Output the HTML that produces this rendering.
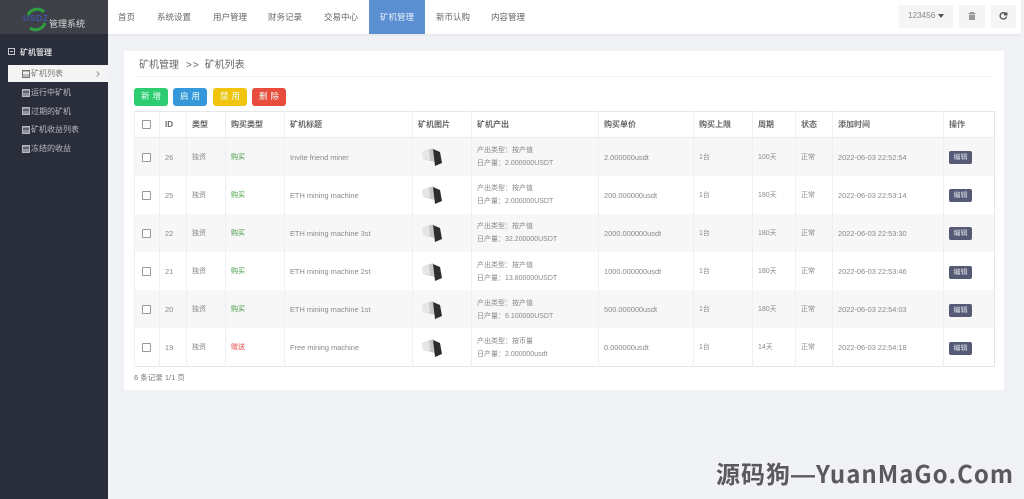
<!DOCTYPE html>
<html lang="zh-CN">
<head>
<meta charset="utf-8">
<title>矿机列表</title>
<style>
*{box-sizing:border-box}
html,body{margin:0;padding:0;width:1024px;height:499px;overflow:hidden;background:#f0f2f6;font-family:"Liberation Sans","Noto Sans CJK SC",sans-serif;color:#777}
#wrap{position:absolute;left:0;top:0;width:1024px;height:499px;background:#f0f2f6;filter:blur(.3px)}
.abs{position:absolute;white-space:nowrap}
#side{position:absolute;left:0;top:0;width:108px;height:499px;background:#2a2e3b}
#logo{position:absolute;left:0;top:0;width:108px;height:34px;background:#3e4147}
#top{position:absolute;left:108px;top:0;width:913px;height:34px;background:#fff;box-shadow:0 1px 2px rgba(0,0,0,.07)}
.nav{position:absolute;top:0;height:34px;line-height:34px;font-size:8.5px;color:#666;text-align:center}
.nav.on{background:#5a90d2;color:#e8f0fa}
.tb{position:absolute;top:5px;height:23px;background:#f5f5f5;border-radius:1px}
.menu{position:absolute;left:31px;font-size:8px;color:#b8bbc2;white-space:nowrap;line-height:10px}
.ico{position:absolute;left:22px;width:8px;height:8px;border:1px solid #b8bbc2;background:linear-gradient(#8f929a 0 1px,#5f626c 1px 3px,#8f929a 3px)}
#card{position:absolute;left:124px;top:51px;width:880px;height:339px;background:#fff}
.btn{position:absolute;top:88px;width:34px;height:17.5px;border-radius:3px;color:#e9fff3;font-size:8.5px;line-height:17.5px;text-align:center;letter-spacing:3px;padding-left:3px}
table{position:absolute;left:134px;top:111px;width:860px;height:256px;border-collapse:collapse;table-layout:fixed;font-size:7.4px;color:#888;background:#fff;border:1px solid #e5e6e8}
th,td{border-left:1px solid #eeeff0;padding:0 0 0 5px;white-space:nowrap;overflow:hidden;text-align:left;font-weight:normal}
th{height:26px;font-size:8px;color:#666;font-weight:bold;border-bottom:1px solid #e8e9ea}
td{height:38px;line-height:13px;padding-top:1px}
td.z{font-size:7px}
tr.alt td{background:#f7f7f7}
th.c,td.c{padding:0 1px 0 0;text-align:center}
.cb{display:inline-block;width:9px;height:9px;border:1px solid #999;border-radius:1px;background:#fff;vertical-align:middle}
.g{color:#3f9a3f}.r{color:#e04a4a}
.ed{display:inline-block;width:23px;height:13px;line-height:13px;background:#565a75;color:#dfe0e8;font-size:7px;text-align:center;border-radius:2px}
.mini{display:block;margin:0 0 0 3px}
#wm{position:absolute;left:716px;top:455px;font-size:24px;line-height:36px;font-weight:bold;color:#5a5a5d;white-space:nowrap;font-family:"Noto Sans CJK SC","Liberation Sans",sans-serif;letter-spacing:1px}
#wm span{font-family:"Liberation Sans",sans-serif}
</style>
</head>
<body>
<div id="wrap">
<div id="side">
<div id="logo">
<svg class="abs" style="left:22px;top:6px" width="28" height="26" viewBox="0 0 28 26"><path d="M6 9A10 10 0 0 1 22 6" fill="none" stroke="#2f9e3f" stroke-width="3"/><path d="M8 22A10 10 0 0 0 23 17" fill="none" stroke="#2f9e3f" stroke-width="3"/></svg>
<div class="abs" style="left:23px;top:13px;font-size:8.5px;font-weight:bold;letter-spacing:.6px;color:#3f55a8">USDZ</div>
<div class="abs" style="left:49px;top:18px;font-size:9px;line-height:12px;color:#dcdcdc">管理系统</div>
</div>
<div class="abs" style="left:8px;top:48px;width:7px;height:7px;border:1px solid #c8cad0"></div>
<div class="abs" style="left:10px;top:51px;width:3px;height:1px;background:#c8cad0"></div>
<div class="abs" style="left:20px;top:48px;font-size:8px;line-height:10px;font-weight:bold;color:#d6d8dc">矿机管理</div>
<div class="abs" style="left:8px;top:65px;width:100px;height:17px;background:#f4f4f5"></div>
<div class="ico" style="top:70px;border-color:#777;background:linear-gradient(#bbb 0 1px,#eee 1px 3px,#bbb 3px)"></div><div class="menu" style="top:69px;color:#777">矿机列表</div>
<div class="abs" style="left:95px;top:72px;width:4px;height:4px;border-top:1px solid #999;border-right:1px solid #999;transform:rotate(45deg)"></div>
<div class="ico" style="top:89px"></div><div class="menu" style="top:88px">运行中矿机</div>
<div class="ico" style="top:107px"></div><div class="menu" style="top:107px">过期的矿机</div>
<div class="ico" style="top:126px"></div><div class="menu" style="top:125px">矿机收益列表</div>
<div class="ico" style="top:145px"></div><div class="menu" style="top:144px">冻结的收益</div>
</div>

<div id="top"></div>
<div class="nav" style="left:108px;width:37px">首页</div>
<div class="nav" style="left:146px;width:56px">系统设置</div>
<div class="nav" style="left:202px;width:56px">用户管理</div>
<div class="nav" style="left:257px;width:56px">财务记录</div>
<div class="nav" style="left:313px;width:56px">交易中心</div>
<div class="nav on" style="left:369px;width:56px">矿机管理</div>
<div class="nav" style="left:425px;width:56px">新币认购</div>
<div class="nav" style="left:480px;width:56px">内容管理</div>
<div class="tb" style="left:899px;width:54px"></div>
<div class="abs" style="left:908px;top:11px;font-size:8.2px;line-height:10px;color:#888">123456</div>
<div class="abs" style="left:938px;top:14px;border-left:3px solid transparent;border-right:3px solid transparent;border-top:4px solid #555"></div>
<div class="tb" style="left:959px;width:26px"></div>
<svg class="abs" style="left:968px;top:11px" width="8" height="9" viewBox="0 0 8 9"><path d="M2 1H6V2H7.500V3H.5V2H2ZM1 3.500H7V9H1Z" fill="#999"/></svg>
<div class="tb" style="left:991px;width:25px"></div>
<svg class="abs" style="left:999px;top:11px" width="9" height="9" viewBox="0 0 9 9"><path d="M6 2.100A3.200 3.200 0 1 0 7.500 5.500" fill="none" stroke="#555" stroke-width="1.400"/><path d="M5 1.500H8.500V4.500H5Z" fill="#555"/></svg>

<div id="card"></div>
<div class="abs" style="left:139px;top:59px;font-size:10px;line-height:13px;color:#666">矿机管理<span style="margin:0 5px 0 7px;letter-spacing:1px">&gt;&gt;</span>矿机列表</div>
<div class="abs" style="left:134px;top:76px;width:860px;height:1px;background:#f3f3f4"></div>
<div class="btn" style="left:134px;background:#2ecc71">新增</div>
<div class="btn" style="left:173px;background:#3498db">启用</div>
<div class="btn" style="left:213px;background:#f1c40f">禁用</div>
<div class="btn" style="left:252px;background:#e74c3c">删除</div>

<table>
<colgroup><col style="width:25px"><col style="width:27px"><col style="width:39px"><col style="width:59px"><col style="width:128px"><col style="width:59px"><col style="width:127px"><col style="width:95px"><col style="width:59px"><col style="width:43px"><col style="width:37px"><col style="width:111px"><col style="width:51px"></colgroup>
<tr><th class="c"><span class="cb"></span></th><th>ID</th><th>类型</th><th>购买类型</th><th>矿机标题</th><th>矿机图片</th><th>矿机产出</th><th>购买单价</th><th>购买上限</th><th>周期</th><th>状态</th><th>添加时间</th><th>操作</th></tr>
<tr class="alt"><td class="c"><span class="cb"></span></td><td>26</td><td class="z">独资</td><td class="z g">购买</td><td>Invite friend miner</td><td><svg class="mini" width="22" height="18" viewBox="0 0 22 18"><path d="M1 4L12 0L14 14L2 11Z" fill="#c9c9c9"/><path d="M1 4L8 2L9 12L2 11Z" fill="#e6e6e6"/><path d="M12 1L19 4L21 15L14 18Z" fill="#2e2e2e"/></svg></td><td class="z">产出类型：按产值<br>日产量：2.000000USDT</td><td>2.000000usdt</td><td class="z">1台</td><td class="z">100天</td><td class="z">正常</td><td>2022-06-03 22:52:54</td><td><span class="ed">编辑</span></td></tr>
<tr><td class="c"><span class="cb"></span></td><td>25</td><td class="z">独资</td><td class="z g">购买</td><td>ETH mining machine</td><td><svg class="mini" width="22" height="18" viewBox="0 0 22 18"><path d="M1 4L12 0L14 14L2 11Z" fill="#c9c9c9"/><path d="M1 4L8 2L9 12L2 11Z" fill="#e6e6e6"/><path d="M12 1L19 4L21 15L14 18Z" fill="#2e2e2e"/></svg></td><td class="z">产出类型：按产值<br>日产量：2.000000USDT</td><td>200.000000usdt</td><td class="z">1台</td><td class="z">180天</td><td class="z">正常</td><td>2022-06-03 22:53:14</td><td><span class="ed">编辑</span></td></tr>
<tr class="alt"><td class="c"><span class="cb"></span></td><td>22</td><td class="z">独资</td><td class="z g">购买</td><td>ETH mining machine 3st</td><td><svg class="mini" width="22" height="18" viewBox="0 0 22 18"><path d="M1 4L12 0L14 14L2 11Z" fill="#c9c9c9"/><path d="M1 4L8 2L9 12L2 11Z" fill="#e6e6e6"/><path d="M12 1L19 4L21 15L14 18Z" fill="#2e2e2e"/></svg></td><td class="z">产出类型：按产值<br>日产量：32.200000USDT</td><td>2000.000000usdt</td><td class="z">1台</td><td class="z">180天</td><td class="z">正常</td><td>2022-06-03 22:53:30</td><td><span class="ed">编辑</span></td></tr>
<tr><td class="c"><span class="cb"></span></td><td>21</td><td class="z">独资</td><td class="z g">购买</td><td>ETH mining machine 2st</td><td><svg class="mini" width="22" height="18" viewBox="0 0 22 18"><path d="M1 4L12 0L14 14L2 11Z" fill="#c9c9c9"/><path d="M1 4L8 2L9 12L2 11Z" fill="#e6e6e6"/><path d="M12 1L19 4L21 15L14 18Z" fill="#2e2e2e"/></svg></td><td class="z">产出类型：按产值<br>日产量：13.800000USDT</td><td>1000.000000usdt</td><td class="z">1台</td><td class="z">180天</td><td class="z">正常</td><td>2022-06-03 22:53:46</td><td><span class="ed">编辑</span></td></tr>
<tr class="alt"><td class="c"><span class="cb"></span></td><td>20</td><td class="z">独资</td><td class="z g">购买</td><td>ETH mining machine 1st</td><td><svg class="mini" width="22" height="18" viewBox="0 0 22 18"><path d="M1 4L12 0L14 14L2 11Z" fill="#c9c9c9"/><path d="M1 4L8 2L9 12L2 11Z" fill="#e6e6e6"/><path d="M12 1L19 4L21 15L14 18Z" fill="#2e2e2e"/></svg></td><td class="z">产出类型：按产值<br>日产量：6.100000USDT</td><td>500.000000usdt</td><td class="z">1台</td><td class="z">180天</td><td class="z">正常</td><td>2022-06-03 22:54:03</td><td><span class="ed">编辑</span></td></tr>
<tr><td class="c"><span class="cb"></span></td><td>19</td><td class="z">独资</td><td class="z r">赠送</td><td>Free mining machine</td><td><svg class="mini" width="22" height="18" viewBox="0 0 22 18"><path d="M1 4L12 0L14 14L2 11Z" fill="#c9c9c9"/><path d="M1 4L8 2L9 12L2 11Z" fill="#e6e6e6"/><path d="M12 1L19 4L21 15L14 18Z" fill="#2e2e2e"/></svg></td><td class="z">产出类型：按币量<br>日产量：2.000000usdt</td><td>0.000000usdt</td><td class="z">1台</td><td class="z">14天</td><td class="z">正常</td><td>2022-06-03 22:54:18</td><td><span class="ed">编辑</span></td></tr>
</table>
<div class="abs" style="left:134px;top:373px;font-size:7.5px;line-height:10px;color:#777">6 条记录 1/1 页</div>
<div id="wm">源码狗<span>—</span>YuanMaGo.Com</div>
</div>
</body>
</html>
